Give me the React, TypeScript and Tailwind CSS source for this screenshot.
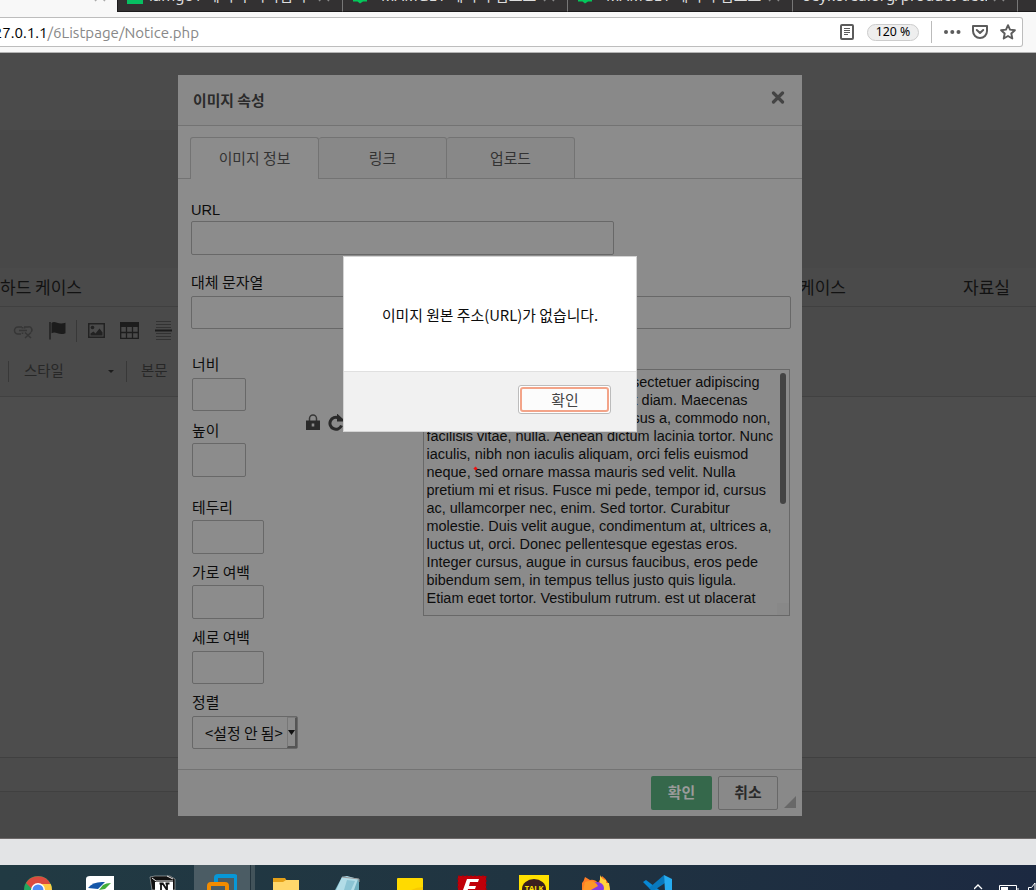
import type { ReactNode } from 'react';

const KR = "font-['Noto_Sans_CJK_KR',sans-serif]";

const TAB_TITLES = ['iamgo1 에서의 이의업니다', 'MAMGE1 에디터 업로드', 'MAMGE1 에디터 업로드', 'oeykorea.org/product-detai'];

const PREVIEW_LINES = [
  'Lorem ipsum dolor sit amet, consectetuer adipiscing',
  'elit. Maecenas feugiat consequat diam. Maecenas',
  'metus. Vivamus diam purus, cursus a, commodo non,',
  'facilisis vitae, nulla. Aenean dictum lacinia tortor. Nunc',
  'iaculis, nibh non iaculis aliquam, orci felis euismod',
  'neque, sed ornare massa mauris sed velit. Nulla',
  'pretium mi et risus. Fusce mi pede, tempor id, cursus',
  'ac, ullamcorper nec, enim. Sed tortor. Curabitur',
  'molestie. Duis velit augue, condimentum at, ultrices a,',
  'luctus ut, orci. Donec pellentesque egestas eros.',
  'Integer cursus, augue in cursus faucibus, eros pede',
  'bibendum sem, in tempus tellus justo quis ligula.',
  'Etiam eget tortor. Vestibulum rutrum, est ut placerat',
];

function TabStrip() {
  return (
    <div className="flex h-3 shrink-0 overflow-hidden bg-[#333132]">
      <div className="flex h-3 w-[118px] shrink-0 items-end justify-end border-r border-[#1c1b1c] bg-[#f8f8f8] pr-[11px]">
        <svg width="12" height="12" viewBox="0 0 12 12" className="text-[#aaa]">
          <path d="M1 1 3 -1M9 -1l2 2" stroke="currentColor" strokeWidth="1.5" />
        </svg>
      </div>
      {TAB_TITLES.map((title, i) => (
        <div key={i} className="flex h-3 w-[225px] shrink-0 border-r border-[#777] border-b border-b-[#1c1b1c] pl-[9px]">
          {i < 3 && (
            <svg width="17" height="4" viewBox="0 0 17 4" className="shrink-0">
              {i === 0 ? <path d="M0 0h16v4H0z" fill="#07bf62" /> : <path d="M1 0h14v1.500h-4L8 3.500 5.500 1.500H1z" fill="#03c75a" />}
            </svg>
          )}
          <div className={`h-2 overflow-hidden ${i === 3 ? 'w-[185px]' : i === 0 ? 'ml-[5px] w-[162px]' : 'ml-[12px] w-[155px]'}`}>
            <div className="-mt-[15px] font-['Noto_Sans','Noto_Sans_CJK_KR',sans-serif] text-[15px] leading-5 whitespace-nowrap text-[#ddd]">{title}</div>
          </div>
          <svg width="12" height="4" viewBox="0 0 12 4" className="mr-3 ml-auto shrink-0">
            <path d="M1 1 3-1M9-1l2 2" stroke="#888" strokeWidth="1.500" />
          </svg>
        </div>
      ))}
      <div className="h-3 flex-1 border-b border-[#1c1b1c]" />
    </div>
  );
}

function AddressBar() {
  return (
    <div className="flex h-[41px] shrink-0 border-b border-[#b4b4b4] bg-[#f8f8f8] pt-[5px]">
      <div className="flex h-[30px] w-[1023px] items-center rounded-r-[3px] border border-l-0 border-[#bdbdbd] bg-white">
        <div className="flex w-[199px] shrink-0 justify-end overflow-hidden pt-[2px] font-[Ubuntu,'Noto_Sans',sans-serif] text-[15.100px] leading-5 whitespace-nowrap text-[#888]">
          <span className="text-black">127.0.1.1</span>/6Listpage/Notice.php
        </div>
        <svg width="14" height="16" viewBox="0 0 14 16" className="ml-[641px]" fill="none" stroke="#5c5c5c">
          <rect x="1" y="1" width="12" height="14" rx="1" strokeWidth="2" />
          <path d="M4 4.500h6M4 6.500h6M4 8.500h6M4 10.500h4" strokeWidth="1" />
        </svg>
        <div className="ml-[13px] flex h-[17px] w-[52px] items-center justify-center rounded-full border border-[#ccc] bg-[#eee] pt-px font-['Noto_Sans',sans-serif] text-[12.300px] text-black">120 %</div>
        <div className="ml-3 h-[22px] w-px bg-[#bbb]" />
        <svg width="17" height="4" viewBox="0 0 17 4" className="ml-3" fill="#5c5c5c">
          <circle cx="2" cy="2" r="2" /><circle cx="8.300" cy="2" r="2" /><circle cx="14.500" cy="2" r="2" />
        </svg>
        <svg width="16" height="14" viewBox="0 0 16 14" className="ml-[11px]" fill="none" stroke="#5c5c5c" strokeWidth="2" strokeLinecap="round" strokeLinejoin="round">
          <path d="M1 1h14v5a7 7 0 0 1-14 0z" /><path d="m4.800 5 3.200 3 3.200-3" />
        </svg>
        <svg width="16" height="16" viewBox="0 0 16 16" className="ml-3" fill="none" stroke="#5c5c5c" strokeWidth="1.900" strokeLinejoin="round">
          <path d="m8 1.200 2 4.400 4.900.600-3.600 3.300 1 5L8 12l-4.300 2.500 1-5L1.100 6.200 6 5.600z" />
        </svg>
      </div>
    </div>
  );
}

function EditorPage() {
  return (
    <div className={`flex h-[786px] shrink-0 flex-col bg-[#4a4a4a] ${KR}`}>
      <div className="h-[77px] bg-[#4b4b4b]" />
      <div className="h-[138px] bg-[#484848]" />
      <div className="flex h-[39px] items-center border-b border-[#404040] text-[17px] leading-6 whitespace-nowrap text-[#121212]">
        <div className="w-[760px]">하드 케이스</div>
        <div className="flex w-[86px] justify-end">하드 케이스</div>
        <div className="ml-[117px]">자료실</div>
      </div>
      <div className="h-[90px] border-b border-[#414141] bg-[#4a4a4a]">
        <div className="flex h-[47px] items-center pl-[13px]">
          <svg width="22" height="18" viewBox="0 0 22 18" fill="none" stroke="#363636" strokeWidth="1.500">
            <path d="M9 5H5a3 3 0 0 0 0 7h3M6 8.500h8M11 5h4a3 3 0 0 1 3 5M9.500 5v1.500M9.500 10.500V12M11.500 5v1.500" /><path d="m12 10.500 6 5.500m0-5.500L12 16" />
          </svg>
          <svg width="17" height="19" viewBox="0 0 17 19" className="ml-[14px]">
            <path d="M1 1v17.500" stroke="#222" strokeWidth="1.600" /><path d="M2.500 2c4-3 6 2.500 14-.2v10.400c-7 3-9-2.500-14 0z" fill="#1c1c1c" />
          </svg>
          <div className="ml-[10px] h-[22px] w-px bg-[#383838]" />
          <svg width="17" height="15" viewBox="0 0 17 15" className="ml-[11px]">
            <rect x=".750" y=".750" width="15.500" height="13.500" fill="none" stroke="#222" strokeWidth="1.500" />
            <circle cx="4.500" cy="4.500" r="1.800" fill="#222" /><path d="M2.500 12.500v-2l3-2 2 2 4-5 3 4v3z" fill="#222" />
          </svg>
          <svg width="19" height="17" viewBox="0 0 19 17" className="ml-[15px]" fill="none" stroke="#1d1d1d" strokeWidth="1.300">
            <path d="M0 0h19v5H0z" fill="#1d1d1d" stroke="none" /><path d="M.700.700h17.600v15.600H.700zM6.500 5v11M12.500 5v11M1 10.500h17" />
          </svg>
          <svg width="17" height="20" viewBox="0 0 17 20" className="ml-4" stroke="#333" strokeWidth="1">
            <path d="M1 .500h15M1 3.500h15M1 6.500h15M1 12.500h15M1 15.500h15M1 18.500h15" /><path d="M0 9.500h17" stroke="#1c1c1c" strokeWidth="2" />
          </svg>
        </div>
        <div className="flex h-[34px] items-center pl-2 text-[14.400px] leading-5 text-[#272727]">
          <div className="h-[21px] w-px bg-[#383838]" />
          <div className="-mt-[2px] ml-[15px] w-[84px]">스타일</div>
          <svg width="6" height="3" viewBox="0 0 6 3"><path d="M0 0h6L3 3z" fill="#1c1c1c" /></svg>
          <div className="ml-3 h-[21px] w-px bg-[#383838]" />
          <div className="-mt-[2px] ml-[14px]">본문</div>
        </div>
      </div>
      <div className="h-[361px] border-b border-[#404040] bg-[#4d4d4d]" />
      <div className="h-[34px] border-b border-[#404040] bg-[#4b4b4b]" />
      <div className="flex-1 border-b border-[#6c6868] bg-[#484848]" />
    </div>
  );
}

function Field({ label, labelClass, boxClass }: { label: string; labelClass: string; boxClass: string }) {
  return (
    <div className="flex flex-col">
      <div className={`whitespace-nowrap ${labelClass}`}>{label}</div>
      <div className={`rounded-[2px] border border-[#686868] ${boxClass}`} />
    </div>
  );
}

function PreviewPane() {
  return (
    <div className="relative mt-[40px] h-[247px] w-[367px] border border-[#686868] bg-[#8b8b8b] pt-[3px] pl-[2.500px]">
      <div className="h-[230px] overflow-hidden font-['Liberation_Sans',sans-serif] text-[14.450px] leading-[18px] whitespace-nowrap text-[#0d0d0d]">
        {PREVIEW_LINES.map((line) => <div key={line}>{line}</div>)}
      </div>
      <div className="absolute top-[3px] right-[3px] h-[131px] w-[6px] rounded-full bg-[#444]" />
      <div className="absolute right-0 bottom-0 h-3 w-3 bg-[#888]" />
      <div className="absolute top-[97px] left-[50px] size-[3px] rotate-45 bg-[#e11]" />
    </div>
  );
}

function ImageDialog() {
  return (
    <div className={`absolute top-[75px] left-[178px] flex h-[741px] w-[624px] flex-col bg-[#8c8c8c] text-[14.850px] leading-5 text-[#0c0c0c] ${KR}`}>
      <div className="flex h-[51px] shrink-0 items-center justify-between border-b border-[#737373] bg-[#898989] pr-[17px] pl-[15px] font-bold text-[#2b2b2b]">
        <div>이미지 속성</div>
        <svg width="14" height="13" viewBox="0 0 14 13" className="-mt-[5px]"><path d="m2.500 2 9 9m0-9-9 9" stroke="#444" strokeWidth="3.200" strokeLinecap="round" /></svg>
      </div>
      <div className="flex h-[53px] shrink-0 items-end text-[#333]">
        <div className="h-px w-3 bg-[#737373]" />
        <div className="flex h-[42px] w-[129px] items-center justify-center rounded-t-[3px] border border-b-0 border-[#737373] pb-[2px]">이미지 정보</div>
        <div className="flex h-[42px] w-[128px] items-center justify-center rounded-t-[3px] border border-l-0 border-[#737373] bg-[#888]">링크</div>
        <div className="flex h-[42px] w-[128px] items-center justify-center rounded-t-[3px] border border-l-0 border-[#737373] bg-[#888]">업로드</div>
        <div className="h-px flex-1 bg-[#737373]" />
      </div>
      <div className="flex flex-1 flex-col pt-[22px] pl-[13px]">
        <div className="font-['Liberation_Sans',sans-serif] text-[14.600px] leading-[18px]">URL</div>
        <div className="mt-[2px] h-[34px] w-[423px] rounded-[2px] border border-[#686868]" />
        <div className="mt-[17px] text-[15px]">대체 문자열</div>
        <div className="mt-[4px] h-[33px] w-[600px] rounded-[2px] border border-[#686868]" />
        <div className="flex pl-px">
          <div className="flex w-[231px] flex-col">
            <div className="flex">
              <div className="w-[114px]">
                <Field label="너비" labelClass="mt-[25px]" boxClass="mt-[4px] h-[33px] w-[54px]" />
                <Field label="높이" labelClass="mt-[9px]" boxClass="mt-[3px] h-[34px] w-[54px]" />
              </div>
              <div className="flex items-start gap-[8px] pt-[85px]">
                <svg width="14" height="16" viewBox="0 0 14 16">
                  <path d="M3.500 7V4.500a3.500 3.500 0 0 1 7 0V7" fill="none" stroke="#383838" strokeWidth="1.500" /><path fillRule="evenodd" d="M0 6.500h14V16H0zM5.700 9.500v3h2.600v-3z" fill="#2a2a2a" />
                </svg>
                <svg width="17" height="17" viewBox="0 0 17 17"><path d="M13.500 11.500A6 6 0 1 1 10.500 3.800" fill="none" stroke="#2a2a2a" strokeWidth="3" /><path d="M9-.5v8h6V5z" fill="#2a2a2a" /></svg>
              </div>
            </div>
            <Field label="테두리" labelClass="mt-[20px]" boxClass="mt-[3px] h-[34px] w-[72px]" />
            <Field label="가로 여백" labelClass="mt-[8px]" boxClass="mt-[3px] h-[34px] w-[72px]" />
            <Field label="세로 여백" labelClass="mt-[8px]" boxClass="mt-[4px] h-[33px] w-[72px]" />
            <div className="mt-[8px]">정렬</div>
            <div className="mt-[4px] flex h-[33px] w-[106px] rounded-[2px] border border-[#686868]">
              <div className="flex w-[94px] items-center pl-[12px] whitespace-nowrap">&lt;설정 안 됨&gt;</div>
              <div className="flex w-[10px] items-center justify-end border-t border-r-2 border-b-2 border-l border-t-[#7b7b7b] border-r-[#555] border-b-[#555] border-l-[#777]">
                <svg width="7" height="5" viewBox="0 0 7 5"><path d="M0 0h7L3.500 5z" fill="#111" /></svg>
              </div>
            </div>
          </div>
          <PreviewPane />
        </div>
      </div>
      <div className="flex h-[47px] shrink-0 items-start border-t border-[#737373] bg-[#898989] pt-[6px] pl-[473px] font-bold">
        <div className="flex h-[34px] w-[61px] items-center justify-center rounded-[2px] bg-[#35684b] pb-[2px] text-[#9b9b9b]">확인</div>
        <div className="ml-[6px] flex h-[34px] w-[60px] items-center justify-center rounded-[2px] border border-[#686868] pb-[2px] text-[#292929]">취소</div>
        <svg width="12" height="12" viewBox="0 0 12 12" className="mt-[20px] ml-[6px]"><path d="M12 0v12H0z" fill="#686868" /></svg>
      </div>
    </div>
  );
}

function AlertDialog() {
  return (
    <div className={`absolute top-[256px] left-[343px] flex h-[176px] w-[294px] flex-col border border-[#d4d4d4] bg-white text-[14.850px] leading-5 ${KR}`}>
      <div className="flex h-[115px] items-center justify-center border-b border-[#e0e0e0] pt-px whitespace-nowrap text-[#0c0c0c]">이미지 원본 주소(URL)가 없습니다.</div>
      <div className="flex flex-1 items-start justify-end bg-[#f1f1f1] pt-[13px] pr-[25px]">
        <div className="flex h-[29px] w-[93px] rounded-[3px] border border-[#bcbcbc] bg-white p-px">
          <div className="flex flex-1 items-center justify-center rounded-[3px] border-2 border-[#f3a489] bg-[#fcfcfc] pl-px text-[#444]">확인</div>
        </div>
      </div>
    </div>
  );
}

function TaskIcon({ children, className }: { children: ReactNode; className: string }) {
  return <svg width="30" height="16" viewBox="0 0 30 16" className={`shrink-0 ${className}`}>{children}</svg>;
}

function Taskbar() {
  return (
    <div className="flex h-[25px] shrink-0 items-end overflow-hidden bg-linear-to-r from-[#213a43] via-[#203441] to-[#1c2941]">
      <TaskIcon className="ml-[23px]">
        <circle cx="15" cy="16" r="14" fill="#24a65d" /><path d="M3 9A14 14 0 0 1 27.500 10H15l-5 6z" fill="#db4b3f" /><path d="M15 10h12.700q1.300 3 1.300 6H15z" fill="#ffca45" /><circle cx="15" cy="16" r="7" fill="#fff" /><circle cx="15" cy="16" r="5.500" fill="#4c8bf5" />
      </TaskIcon>
      <TaskIcon className="ml-[32px]">
        <path d="M1 16V5q0-3 4-3h24v14z" fill="#fff" /><path d="M3 14Q8 7 20 8l-7 7z" fill="#1557a8" /><path d="M14 16l4-5q3-2 8-2l-6 6z" fill="#43ad3a" />
      </TaskIcon>
      <TaskIcon className="ml-[33px]">
        <path d="M2 3l5-1h15l5 3v11H4z" fill="#111" stroke="#ddd" strokeWidth=".500" /><path d="M7 8h18v8H7z" fill="#fff" /><path d="M13 16v-6h2l4 6v-6M11.500 9.500h4M17.500 9.500h4" fill="none" stroke="#111" strokeWidth="1.800" /><path d="M4 4l4 3h17M19 2l6 3" fill="none" stroke="#eee" />
      </TaskIcon>
      <div className="ml-[16px] flex h-[25px] w-[56px] shrink-0 items-end justify-center bg-[#4b5c64]">
        <TaskIcon className="">
          <path d="M9 12V3.500Q9 2 11 2h16q2 0 2 2v12" fill="none" stroke="#0797d7" strokeWidth="4" /><path d="M2 18v-6q0-2 2-2h14q2 0 2 2v6" fill="none" stroke="#f28b00" strokeWidth="4" />
        </TaskIcon>
      </div>
      <div className="h-[25px] w-[5px] shrink-0 border-l border-[#23343d] bg-[#42535a]" />
      <TaskIcon className="ml-[16px]">
        <path d="M2 4h12l2 3v9H2z" fill="#e4a018" /><path d="M2 8h10l3-2h13v10H2z" fill="#ffd76b" />
      </TaskIcon>
      <TaskIcon className="ml-[32px]">
        <path d="M2 16 9 3l17 2v11z" fill="#6faebe" /><path d="M9 3l5-1 11 3-4 11H3z" fill="#b2dce7" /><path d="M9 3l17 2v3" stroke="#999" fill="none" /><path d="m14 6 8 1-4 9h-7z" fill="#8cc4d4" />
      </TaskIcon>
      <TaskIcon className="ml-[33px]">
        <rect x="1" y="4" width="26" height="13" rx="1" fill="#ffda00" /><path d="M15 16q6-3 12-3v3z" fill="#f7c900" />
      </TaskIcon>
      <TaskIcon className="ml-[31px]">
        <rect x="1" y="2" width="28" height="16" fill="#c00009" stroke="#a00008" strokeDasharray="2 2" /><path d="M6 16 10 5h12l-1 3h-8l-1 4h7l-1 3h-7l-.500 2z" fill="#fff" />
      </TaskIcon>
      <TaskIcon className="ml-[32px]">
        <path d="M0 1h30v15H0z" fill="#ffe000" /><ellipse cx="15" cy="15" rx="12" ry="10" fill="#3b1e1e" /><text x="15" y="17" textAnchor="middle" fontSize="7.500" fontWeight="700" fontFamily="Open Sans, sans-serif" fill="#ffe000">TALK</text>
      </TaskIcon>
      <TaskIcon className="ml-[32px]">
        <path d="M1 16V9q2-2 3-6l5 3q5-1 8 3l4-7q7 5 8 14z" fill="#ff7d25" /><path d="M19 1q2 5 6 5v3h3l1 7H19z" fill="#ffd33b" /><ellipse cx="16" cy="14" rx="7" ry="6" fill="#863be0" /><path d="M4 8q9-3 13 4l-7 4H2z" fill="#ff9728" />
      </TaskIcon>
      <TaskIcon className="ml-[31px]">
        <path d="M1 8l3-2 16 12h-9z" fill="#0788d5" /><path d="M22 1 7 14l4 3 12-8z" fill="#0879be" /><path d="M22 1l8 4v12h-7z" fill="#26acf1" />
      </TaskIcon>
      <svg width="62" height="10" viewBox="974 0 62 10" className="ml-auto shrink-0" fill="none" stroke="#fff">
        <path d="m974 9 4-4 4 4" strokeWidth="1.300" /><path d="M999.500 10V5.500h17V10M1018 8v2" /><path d="M1001 7h7v3h-7z" fill="#fff" stroke="none" /><path d="M1028.500 10V7.500h3L1035 3v7" />
      </svg>
    </div>
  );
}

export default function App() {
  return (
    <div className="relative flex h-[890px] w-[1036px] flex-col overflow-hidden bg-[#e3e4e6]">
      <TabStrip />
      <AddressBar />
      <EditorPage />
      <div className="min-h-0 flex-1 bg-[#e3e4e6]" />
      <Taskbar />
      <ImageDialog />
      <AlertDialog />
    </div>
  );
}
